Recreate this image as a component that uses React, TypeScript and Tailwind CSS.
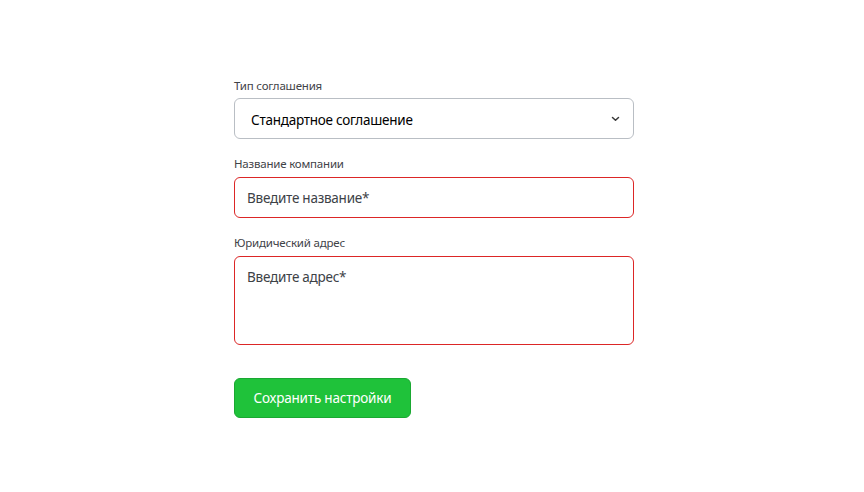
const font = { fontFamily: '"Noto Sans", "Open Sans", sans-serif' };

const Chevron = () => (
  <svg
    className="pointer-events-none absolute right-[14px] top-[18px]"
    width="9"
    height="6"
    viewBox="0 0 9 6"
    fill="none"
  >
    <path d="M1.5 1.5 4.5 4.3l3-2.8" stroke="#3a3a3a" strokeWidth="1.5" strokeLinecap="round" strokeLinejoin="round" />
  </svg>
);

const App = () => {
  return (
    <div className="min-h-[492px] w-full bg-white" style={font}>
      <form className="mx-auto flex w-[400px] translate-x-[2px] flex-col pt-[78px]">
        <label className="text-[11.5px] leading-4 tracking-[-0.2px] text-[#3f4348]">Тип соглашения</label>
        <div className="relative mt-1">
          <select
            defaultValue="standard"
            className="h-[41px] w-full appearance-none rounded-md border border-[#b9bec4] bg-white pl-4 pt-[3px] text-[13.5px] tracking-[-0.25px] text-black outline-none"
          >
            <option value="standard">Стандартное соглашение</option>
          </select>
          <Chevron />
        </div>

        <label className="mt-[17px] text-[11.5px] leading-4 tracking-[-0.2px] text-[#3f4348]">Название компании</label>
        <input
          placeholder="Введите название*"
          className="mt-[5px] h-[41px] w-full rounded-md border border-[#dc2626] px-3 text-[13.5px] tracking-[-0.25px] text-[#333] outline-none placeholder:text-[#3d4247]"
        />

        <label className="mt-[17px] text-[11.5px] leading-4 tracking-[-0.2px] text-[#3f4348]">Юридический адрес</label>
        <textarea
          placeholder="Введите адрес*"
          className="mt-[5px] h-[89px] w-full resize-none rounded-md border border-[#dc2626] px-3 py-[10px] text-[13.5px] tracking-[-0.25px] text-[#333] outline-none placeholder:text-[#3d4247]"
        />

        <div className="mt-[33px]">
          <button
            type="button"
            className="h-[40px] w-[177px] rounded-md border border-[#1aa832] bg-[#1fc23a] text-[13.5px] tracking-[-0.2px] text-white"
          >
            Сохранить настройки
          </button>
        </div>
      </form>
    </div>
  );
};

export default App;
